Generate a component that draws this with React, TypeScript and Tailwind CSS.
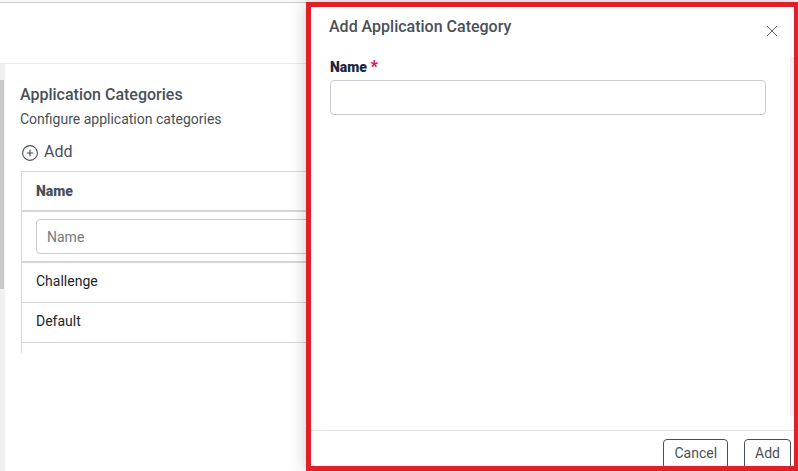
import { useState } from "react";

const categories = ["Challenge", "Default"];

function PlusCircle() {
  return (
    <svg
      width="16"
      height="16"
      viewBox="0 0 16 16"
      fill="none"
      stroke="currentColor"
      strokeLinecap="round"
      className="mt-0.5"
      aria-hidden="true"
    >
      <circle cx="8" cy="8" r="7.4" strokeWidth="1.1" />
      <path d="M8 5.2v5.6M5.2 8h5.6" strokeWidth="1.2" />
    </svg>
  );
}

function CategoryTable() {
  const [filter, setFilter] = useState("");
  const rows = categories.filter((c) =>
    c.toLowerCase().includes(filter.toLowerCase()),
  );
  return (
    <div className="mt-[7px] ml-px">
      <table className="w-full border-separate border-spacing-0 text-sm">
        <thead>
          <tr>
            <th className="h-[41px] border-t border-b-2 border-l border-[#d5d8db] px-3.5 py-0 text-left font-black">
              Name
            </th>
          </tr>
          <tr>
            <td className="border-b-2 border-l border-[#d5d8db] px-3.5 py-[7px]">
              <input
                type="text"
                aria-label="Filter by name"
                placeholder="Name"
                value={filter}
                onChange={(e) => setFilter(e.target.value)}
                className="block h-[35px] w-full rounded border border-[#c9ccd0] bg-white px-2.5 outline-none placeholder:text-[#737a81]"
              />
            </td>
          </tr>
        </thead>
        <tbody>
          {rows.map((name) => (
            <tr key={name}>
              <td className="h-10 border-b border-l border-[#d5d8db] px-3.5 pt-0 pb-[3px] text-[#212529]">
                {name}
              </td>
            </tr>
          ))}
          <tr>
            <td className="h-2.5 border-l border-[#d5d8db] p-0" />
          </tr>
        </tbody>
      </table>
    </div>
  );
}

function AddCategoryPanel() {
  return (
    <aside
      role="dialog"
      aria-labelledby="panel-title"
      className="absolute top-0.5 right-0 bottom-0 flex w-[492px] max-w-full flex-col overflow-hidden border-5 border-r-4 border-[#df2029] bg-white shadow-[0_0_16px_rgba(0,0,0,0.22)]"
    >
      <header className="flex items-start justify-between pt-2 pr-4 pl-[18px]">
        <h2 id="panel-title" className="text-base font-medium">
          Add Application Category
        </h2>
        <button type="button" aria-label="Close" className="mt-2.5 text-[#5f6368]">
          <svg width="12" height="12" viewBox="0 0 12 12" fill="none" stroke="currentColor" aria-hidden="true">
            <path d="M1 1l10 10M11 1L1 11" strokeWidth="1" />
          </svg>
        </button>
      </header>
      <div className="mt-[18px] flex min-h-0 flex-1">
        <form className="flex-1 pr-6 pl-[19px]">
          <label
            htmlFor="category-name"
            className="block text-sm font-black text-[#20263e]"
          >
            Name <span className="text-base leading-5 text-[#d6145a]">*</span>
          </label>
          <input
            id="category-name"
            type="text"
            required
            className="mt-[3px] block h-[35px] w-full rounded border border-[#c9ccd0] bg-white px-2.5 text-sm outline-none"
          />
        </form>
        <div className="mb-3.5 w-1 bg-[#f3eeef]" />
      </div>
      <footer className="flex h-9 items-start justify-end gap-4 border-t border-[#e3e5e7] pt-2 pr-[3px]">
        <button
          type="button"
          className="h-[30px] shrink-0 rounded-sm border border-[#495057] px-2.5 pb-0.5 text-sm"
        >
          Cancel
        </button>
        <button
          type="button"
          className="h-[30px] shrink-0 rounded-sm border border-[#495057] px-2.5 pb-0.5 text-sm"
        >
          Add
        </button>
      </footer>
    </aside>
  );
}

export default function App() {
  return (
    <div className="relative flex h-screen flex-col overflow-hidden bg-white font-['Roboto',sans-serif] text-[#495057]">
      <div className="h-[3px] shrink-0 border-b border-[#cbcbcb] bg-[#fafafa]" />
      <div className="h-[61px] shrink-0 border-b border-[#ececec]" />
      <div className="flex min-h-0 flex-1">
        <div className="w-[5px] shrink-0 bg-[#f0f0f0] pt-4">
          <div className="h-[209px] w-1 bg-[#cbcbcb]" />
        </div>
        <main className="min-w-0 flex-1 pt-[19px] pl-[15px]">
          <h1 className="text-base font-medium">Application Categories</h1>
          <p className="mt-0.5 text-sm">Configure application categories</p>
          <button type="button" className="mt-[11px] ml-0.5 flex items-center gap-1.5 text-base">
            <PlusCircle />
            Add
          </button>
          <CategoryTable />
        </main>
      </div>
      <AddCategoryPanel />
    </div>
  );
}
